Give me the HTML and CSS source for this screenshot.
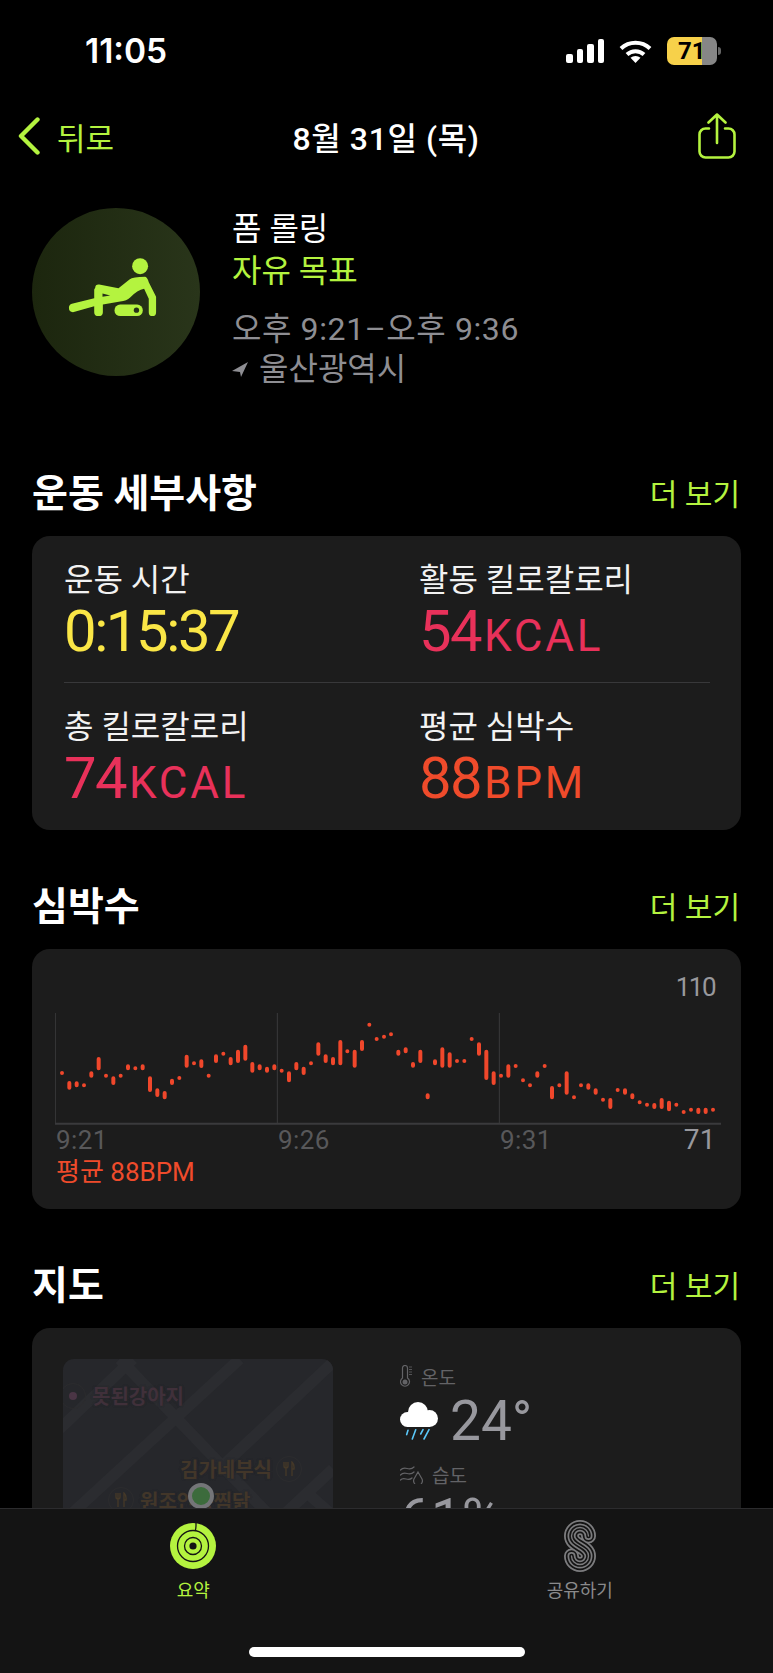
FILE: index.html
```html
<!DOCTYPE html>
<html lang="ko">
<head>
  <meta charset="UTF-8">
  <title>폼 롤링 - 8월 31일</title>
  <link rel="stylesheet" href="styles.css">
</head>
<body>
  <div class="status">
    <span class="time">11:05</span>
    <div class="status-icons">
      <div class="signal"><i></i><i></i><i></i><i></i></div>
      <svg class="wifi" viewBox="0 0 33 24" width="33" height="24">
        <path d="M2 9.5A21 21 0 0 1 31 9.5M8 15.5A12.5 12.5 0 0 1 25 15.5" fill="none" stroke="#fff" stroke-width="4"/>
        <path d="M16.5 24L11.5 18.8A7.5 7.5 0 0 1 21.5 18.8Z" fill="#fff"/>
      </svg>
      <div class="battery">71</div>
    </div>
  </div>

  <nav class="nav">
    <a class="back">
      <svg viewBox="0 0 22 38" width="22" height="38"><path d="M19.5 2.5L3 19L19.5 35.5" fill="none" stroke="#b4f33f" stroke-width="4.4" stroke-linecap="round" stroke-linejoin="round"/></svg>
      <span>뒤로</span>
    </a>
    <div class="nav-title">8월 31일 (목)</div>
    <svg class="share" viewBox="0 0 38 46" width="38" height="46">
      <path d="M11 15.5H7.5a6 6 0 0 0-6 6V38.5a6 6 0 0 0 6 6h23a6 6 0 0 0 6-6V21.5a6 6 0 0 0-6-6H27M19 30V1.5M10.5 9.5L19 1.5L27.5 9.5" fill="none" stroke="#b4f33f" stroke-width="2.6" stroke-linecap="round" stroke-linejoin="round"/>
    </svg>
  </nav>

  <header class="summary">
    <div class="workout-icon">
      <svg viewBox="5 25 505 505" width="168" height="168">
        <circle cx="330" cy="200" r="24" fill="#b4f33f"/>
        <path d="M195 265Q195 254 207 255L265 266L298 240Q308 232 345 232Q352 234 356 248L378 292V338Q378 350 367 350Q356 350 356 338V298L342 268Q322 272 300 294Q290 305 270 306L218 315V338Q218 350 205 350Q192 350 192 338V320L128 338Q116 338 116 325Q116 316 125 313L192 296V270Z" fill="#b4f33f"/>
        <path d="M217 282L240 288L217 292Z" fill="#26311a"/>
        <rect x="253" y="315" width="85" height="35" rx="17" fill="#b4f33f"/>
        <circle cx="319" cy="332" r="8" fill="#26311a"/>
      </svg>
    </div>
    <div class="summary-text">
      <div class="workout-name">폼 롤링</div>
      <div class="workout-goal">자유 목표</div>
      <div class="workout-meta">오후 9:21–오후 9:36</div>
      <div class="workout-meta workout-place">
        <svg viewBox="0 0 16 15" width="16" height="15"><path d="M16 0L0 9L8 10L9 15Z" fill="#8e8e93"/></svg>
        울산광역시
      </div>
    </div>
  </header>

  <section class="section">
    <div class="head"><h2>운동 세부사항</h2><a>더 보기</a></div>
    <div class="card">
      <div class="metric-row">
        <div>
          <div class="metric-label">운동 시간</div>
          <div class="metric-value yellow">0:15:37</div>
        </div>
        <div>
          <div class="metric-label">활동 킬로칼로리</div>
          <div class="metric-value red">54<small>KCAL</small></div>
        </div>
      </div>
      <div class="metric-row">
        <div>
          <div class="metric-label">총 킬로칼로리</div>
          <div class="metric-value red">74<small>KCAL</small></div>
        </div>
        <div>
          <div class="metric-label">평균 심박수</div>
          <div class="metric-value orange">88<small>BPM</small></div>
        </div>
      </div>
    </div>
  </section>

  <section class="section">
    <div class="head"><h2>심박수</h2><a>더 보기</a></div>
    <div class="card heart-card">
      <div class="chart-max">110</div>
      <svg class="chart" viewBox="0 0 1998 336" width="666" height="112">
        <path d="M1 0V330M667 0V330M1333 0V330" fill="none" stroke="#3a3a3c" stroke-width="3"/>
        <path d="M0 332H1998" fill="none" stroke="#3a3a3c" stroke-width="6"/>
        <path fill="none" stroke="#f0472b" stroke-width="12" stroke-linecap="round" d="
          M21 180v.1M43 210V224M65 211V217M87 217v.1M109 181V188M131 138V166M153 188v.1M175 196V210M197 188v.1M219 160V166
          M241 166v.1M263 160V166M285 196V231M307 232V246M329 240V253M351 203V210M373 195v.1M395 131V158M417 151v.1M439 145V159
          M461 188v.1M483 130V144M505 122v.1M527 138V151M549 116V144M571 101V137M592 153V173M614 160V166M636 167V173M658 160V166
          M680 173v.1M702 181V202M724 153V166M746 167V180M768 151v.1M790 94V122M812 130V144M834 138V151M856 87V151M877 115v.1
          M899 116V158M921 87V108M943 35v.1M965 78v.1M987 71v.1M1008 64v.1M1030 116V122M1052 109V115M1074 153V158M1096 116V144
          M1118 247V253M1140 145V151M1162 109V158M1184 124V158M1206 144v.1M1228 144v.1M1250 78v.1M1272 94V122M1294 116V195M1316 181V210
          M1338 188v.1M1360 160V188M1382 159v.1M1404 202v.1M1425 217v.1M1447 181V188M1469 159v.1M1491 225V253M1513 217v.1M1535 181V239
          M1557 253v.1M1578 217v.1M1600 217V224M1622 232V239M1644 260v.1M1666 261V282M1688 231v.1M1710 232V239M1732 247V253M1754 268v.1
          M1776 275v.1M1798 276V282M1820 261V282M1842 269V289M1864 275v.1M1886 297v.1M1908 290v.1M1930 290V297M1952 290V297M1974 290v.1"/>
      </svg>
      <div class="chart-ticks">
        <span>9:21</span><span>9:26</span><span>9:31</span><span class="chart-min">71</span>
      </div>
      <div class="chart-avg">평균 88BPM</div>
    </div>
  </section>

  <section class="section">
    <div class="head"><h2>지도</h2><a>더 보기</a></div>
    <div class="card map-card">
      <div class="map">
        <svg class="map-roads" viewBox="0 0 810 600" width="270" height="200">
          <path d="M-10 210L210 0M20 470L530 0M490 310L810 10M660 470L810 330M170 0L620 470M730 400L810 470" fill="none" stroke="#2b2c30" stroke-width="34"/>
        </svg>
        <span class="map-ring ring-pink"></span>
        <span class="map-dot"></span>
        <span class="place place-pink">못된강아지</span>
        <span class="place place-kimga">김가네부식</span>
        <span class="map-ring ring-kimga">
          <svg viewBox="0 0 12 16" width="12" height="16"><path d="M3 1V15M1 1V5Q1 7 3 7Q5 7 5 5V1M9 15V1Q11.5 3 11 8H9" fill="none" stroke="#443828" stroke-width="1.4"/></svg>
        </span>
        <span class="place place-wonjo">원조안동찜닭</span>
        <span class="map-ring ring-wonjo">
          <svg viewBox="0 0 12 16" width="12" height="16"><path d="M3 1V15M1 1V5Q1 7 3 7Q5 7 5 5V1M9 15V1Q11.5 3 11 8H9" fill="none" stroke="#443828" stroke-width="1.4"/></svg>
        </span>
        <span class="map-pin"></span>
      </div>
      <div class="weather">
        <div class="weather-label">
          <svg viewBox="0 0 12 23" width="12" height="23">
            <path d="M2.5 13V3a2.5 2.5 0 0 1 5 0V13a4.5 4.5 0 1 1-5 0Z" fill="none" stroke="#636366" stroke-width="1.2"/>
            <circle cx="5" cy="17" r="2.5" fill="#636366"/>
            <path d="M9 2h3M9 4.5h3M9 7h3M9 9.5h3" stroke="#636366" stroke-width=".8"/>
          </svg>
          온도
        </div>
        <div class="weather-value">
          <svg viewBox="0 0 38 38" width="38" height="38">
            <circle cx="18" cy="10" r="10" fill="#fff"/>
            <circle cx="29.5" cy="16.5" r="8.5" fill="#fff"/>
            <circle cx="7.5" cy="17.5" r="7.5" fill="#fff"/>
            <rect x="7" y="14" width="23" height="11" fill="#fff"/>
            <path d="M8 28.3L6.7 32.6M15.7 27.7L12.3 37M23 27.7L20.7 32M29 27.7L24 37" stroke="#5ac8fa" stroke-width="1.6" stroke-linecap="round"/>
          </svg>
          24°
        </div>
        <div class="weather-label weather-label-next">
          <svg viewBox="0 0 23 20" width="23" height="20">
            <path d="M.5 6C5 1 9 8 14 3M.5 11C5 6 9 13 14 8M.5 16C4 12 8 18 12 14" fill="none" stroke="#636366" stroke-width="1.2" stroke-linecap="round"/>
            <path d="M18 8L22 15A4.4 4.4 0 1 1 14 15Z" fill="none" stroke="#636366" stroke-width="1.2"/>
          </svg>
          습도
        </div>
        <div class="weather-value">61%</div>
      </div>
    </div>
  </section>

  <div class="tabbar">
    <div class="tab tab-active">
      <div class="tab-icon">
        <svg viewBox="0 0 46 46" width="46" height="46">
          <circle cx="23" cy="23" r="23" fill="#b4f33f"/>
          <circle cx="23" cy="23" r="15.5" fill="none" stroke="#141414" stroke-width="1.3"/>
          <circle cx="23" cy="23" r="8.5" fill="none" stroke="#141414" stroke-width="1.3"/>
          <circle cx="23" cy="23" r="3.6" fill="#141414"/>
          <path d="M26 0V3Q26 6 25 8" fill="none" stroke="#141414" stroke-width="1.3"/>
        </svg>
      </div>
      <span>요약</span>
    </div>
    <div class="tab">
      <div class="tab-icon">
        <svg viewBox="0 0 32 52" width="32" height="52" fill="none" stroke-linecap="round">
          <path d="M24.5 16A8.5 8.5 0 0 0 7.5 16C7.5 26 24.5 26 24.5 36A8.5 8.5 0 0 1 7.5 36" stroke="#7c7c7e" stroke-width="15"/>
          <path d="M24.5 16A8.5 8.5 0 0 0 7.5 16C7.5 26 24.5 26 24.5 36A8.5 8.5 0 0 1 7.5 36" stroke="#141414" stroke-width="11.4"/>
          <path d="M24.5 16A8.5 8.5 0 0 0 7.5 16C7.5 26 24.5 26 24.5 36A8.5 8.5 0 0 1 7.5 36" stroke="#7c7c7e" stroke-width="8"/>
          <path d="M24.5 16A8.5 8.5 0 0 0 7.5 16C7.5 26 24.5 26 24.5 36A8.5 8.5 0 0 1 7.5 36" stroke="#141414" stroke-width="4.6"/>
          <path d="M24.5 16A8.5 8.5 0 0 0 7.5 16C7.5 26 24.5 26 24.5 36A8.5 8.5 0 0 1 7.5 36" stroke="#7c7c7e" stroke-width="1.4"/>
        </svg>
      </div>
      <span>공유하기</span>
    </div>
    <div class="home-bar"></div>
  </div>
</body>
</html>
```

FILE: styles.css
```css
* {
  box-sizing: border-box;
}
html, body {
  margin: 0;
  height: 1673px;
  overflow: hidden;
}
body {
  position: relative;
  background-color: #000;
  color: #fff;
  font-family: Roboto, "Noto Sans CJK KR", sans-serif;
}

/* status bar */
.status {
  display: flex;
  justify-content: space-between;
  align-items: center;
  height: 102px;
  padding: 0 56px 0 85px;
}
.time {
  font-family: Inter, sans-serif;
  font-size: 33.5px;
  font-weight: 600;
}
.status-icons {
  display: flex;
  align-items: center;
  gap: 15px;
}
.signal {
  display: flex;
  align-items: flex-end;
  gap: 4px;
  height: 24px;
}
.signal i {
  width: 6.5px;
  background: #fff;
  border-radius: 2px;
}
.signal i:nth-child(1) { height: 9px; }
.signal i:nth-child(2) { height: 14px; }
.signal i:nth-child(3) { height: 19px; }
.signal i:nth-child(4) { height: 24px; }
.battery {
  position: relative;
  width: 50px;
  height: 28px;
  padding-left: 11px;
  border-radius: 7px;
  background: linear-gradient(90deg, #f7d14a 70%, #868686 70%);
  color: #000;
  font-size: 24px;
  font-weight: 700;
  line-height: 28px;
}
.battery::after {
  content: "";
  position: absolute;
  left: 51px;
  top: 10px;
  width: 3px;
  height: 8px;
  border-radius: 0 3px 3px 0;
  background: #666;
}

/* nav */
.nav {
  display: grid;
  grid-template-columns: 1fr auto 1fr;
  align-items: center;
  height: 68px;
  padding: 0 37px 0 18px;
}
.back {
  display: flex;
  align-items: center;
  gap: 17px;
  color: #b4f33f;
  font-size: 31px;
}
.nav-title {
  margin-left: 18px;
  font-size: 32px;
  font-weight: 500;
  letter-spacing: .6px;
}
.share {
  justify-self: end;
}

/* summary */
.summary {
  display: flex;
  gap: 32px;
  margin-top: 38px;
  padding-left: 32px;
}
.workout-icon {
  width: 168px;
  height: 168px;
  border-radius: 50%;
  background: linear-gradient(90deg, #1c260e, #29351a);
}
.workout-icon svg {
  display: block;
}
.summary-text {
  font-size: 32px;
  line-height: 42px;
}
.workout-goal {
  color: #b4f33f;
}
.workout-meta {
  color: #8e8e93;
  line-height: 40px;
}
.workout-meta:nth-child(3) {
  margin-top: 17px;
  letter-spacing: .6px;
}
.workout-place {
  display: flex;
  align-items: center;
  gap: 11px;
}

/* sections */
.section {
  margin-top: 45px;
  padding: 0 32px;
}
.summary + .section {
  margin-top: 73px;
}
.head {
  display: flex;
  justify-content: space-between;
  align-items: center;
  height: 60px;
  margin-bottom: 14px;
  padding-right: 1px;
}
.head h2 {
  margin: 0 0 4px;
  font-size: 39px;
  font-weight: 700;
}
.head a {
  color: #b4f33f;
  font-size: 30px;
}
.card {
  background: #1c1c1c;
  border-radius: 18px;
}

/* metrics */
.metric-row {
  display: grid;
  grid-template-columns: 355px 1fr;
  height: 146px;
  margin: 0 31px 0 32px;
  padding-top: 24px;
}
.metric-row + .metric-row {
  height: 148px;
  border-top: 1px solid #38383a;
  padding-top: 24px;
}
.metric-label {
  height: 40px;
  font-size: 32px;
  line-height: 40px;
  color: #f2f2f2;
}
.metric-value {
  height: 64px;
  font-size: 58px;
  line-height: 63px;
  letter-spacing: -1.6px;
}
.metric-value.yellow {
  letter-spacing: -2.4px;
}
.metric-value small {
  margin-left: 3px;
  font-size: 44px;
  letter-spacing: 2.8px;
}
.yellow { color: #fae646; }
.red { color: #e8315a; }
.orange { color: #ef4b2b; }

/* heart rate */
.heart-card {
  height: 260px;
  padding-top: 23px;
}
.chart-max {
  padding-right: 26px;
  text-align: right;
  font-size: 26px;
  line-height: 30px;
  letter-spacing: -1.5px;
  color: #98989d;
}
.chart {
  display: block;
  margin: 11px 0 0 23px;
}
.chart-ticks {
  display: grid;
  grid-template-columns: 222px 222px 1fr auto;
  padding: 0 25px 0 24px;
  font-size: 26px;
  line-height: 30px;
  letter-spacing: .4px;
  color: #58585a;
}
.chart-min {
  font-size: 28px;
  color: #98989d;
}
.chart-avg {
  height: 30px;
  margin-top: 2px;
  padding-left: 24px;
  font-size: 26px;
  line-height: 30px;
  color: #ef4b2b;
}

/* map + weather */
.map-card {
  display: flex;
  height: 320px;
  padding: 31px 0 0 31px;
}
.map {
  position: relative;
  width: 270px;
  height: 200px;
  overflow: hidden;
  border-radius: 11px;
  background: #26272b;
}
.map-roads {
  position: absolute;
  left: 0;
  top: 0;
}
.map-ring {
  position: absolute;
  display: flex;
  justify-content: center;
  align-items: center;
  width: 26px;
  height: 26px;
  border: 1px solid #2c2c2e;
  border-radius: 50%;
}
.ring-pink { left: -3px; top: 24px; }
.ring-kimga { left: 213px; top: 97px; }
.ring-wonjo { left: 45px; top: 128px; }
.map-dot {
  position: absolute;
  left: 6px;
  top: 33px;
  width: 8px;
  height: 8px;
  border-radius: 50%;
  background: #4a3545;
}
.place {
  position: absolute;
  font-size: 20px;
  font-weight: 700;
  line-height: 24px;
  text-shadow: 0 0 2px #26272b, 0 0 2px #26272b;
}
.place-pink { left: 29px; top: 26px; color: #40303a; }
.place-kimga { left: 117px; top: 99px; color: #423629; }
.place-wonjo { left: 77px; top: 131px; color: #423629; }
.map-pin {
  position: absolute;
  left: 125px;
  top: 124px;
  width: 26px;
  height: 26px;
  border: 4px solid #747578;
  border-radius: 50%;
  background: #3c6b3c;
}
.weather {
  margin-left: 67px;
}
.weather-label {
  display: flex;
  align-items: center;
  gap: 9px;
  height: 34px;
  font-size: 19px;
  color: #636366;
}
.weather-label-next {
  margin-top: 6px;
}
.weather-value {
  display: flex;
  align-items: center;
  gap: 12px;
  height: 60px;
  margin-top: -2px;
  font-size: 55px;
  color: #98989e;
}

/* tab bar */
.tabbar {
  position: absolute;
  left: 0;
  right: 0;
  bottom: 0;
  display: grid;
  grid-template-columns: 1fr 1fr;
  height: 165px;
  padding-top: 10px;
  border-top: 1px solid #2c2c2e;
  background: #141414;
}
.tab {
  display: flex;
  flex-direction: column;
  align-items: center;
  font-size: 18px;
  line-height: 24px;
  color: #8a8a8c;
}
.tab-active {
  color: #b4f33f;
}
.tab-icon {
  display: flex;
  align-items: center;
  height: 54px;
  margin-bottom: 6px;
}
.home-bar {
  position: absolute;
  left: 249px;
  bottom: 16px;
  width: 276px;
  height: 10px;
  border-radius: 5px;
  background: #fff;
}
```
